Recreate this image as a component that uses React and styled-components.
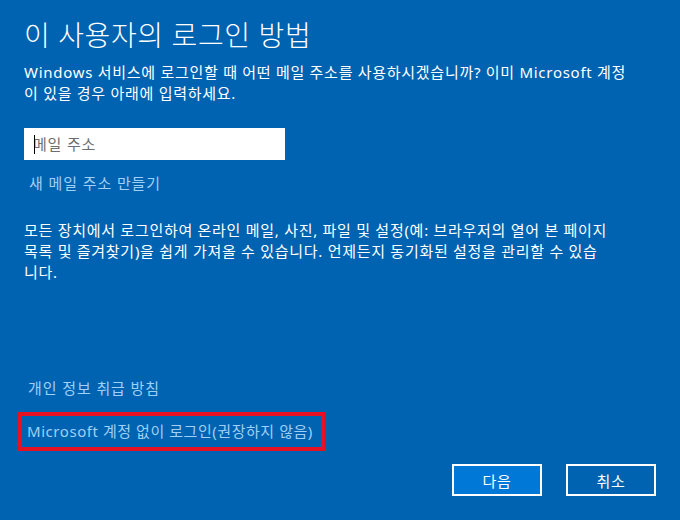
import styled, { createGlobalStyle } from 'styled-components'

const GlobalStyle = createGlobalStyle`
    html, body {
        margin: 0;
        padding: 0;
        background-color: #0063b1;
    }
    body {
        font-family: "Noto Sans", "Noto Sans CJK KR", sans-serif;
        color: white;
    }
`

const Page = styled.div`
    width: 680px;
    height: 520px;
    box-sizing: border-box;
    background-color: #0063b1;
    padding: 16px 24px 0 24px;
    display: flex;
    flex-direction: column;
    .title{
        font-size: 28px;
        font-weight: 300;
        line-height: 38px;
        letter-spacing: 0.6px;
        margin: 0;
    }
    .desc{
        font-size: 15px;
        line-height: 21px;
        letter-spacing: 0.72px;
        margin: 8px 0 0 0;
    }
`

const InputWrap = styled.div`
    position: relative;
    width: 261px;
    margin-top: 24px;
    &::after{
        content: '';
        position: absolute;
        left: 10px;
        top: 7px;
        width: 1px;
        height: 19px;
        background-color: #000;
    }
`

const EmailInput = styled.input`
    width: 100%;
    height: 32px;
    box-sizing: border-box;
    display: block;
    border: none;
    outline: none;
    padding: 0 9px;
    font-family: "Noto Sans", "Noto Sans CJK KR", sans-serif;
    font-size: 15px;
    letter-spacing: 0.8px;
    color: #000;
    caret-color: transparent;
    background-color: white;
    &::placeholder{
        color: #6d6d6d;
    }
`

const LinkText = styled.div`
    font-size: 15px;
    line-height: 21px;
    letter-spacing: ${props => props.$spacing ?? 0.9}px;
    white-space: nowrap;
    color: #9fd0f6;
    padding-left: ${props => props.$indent ?? 5}px;
`

const Footer = styled.div`
    margin-top: auto;
    display: flex;
    flex-direction: column;
    padding-bottom: 24px;
    .red-box{
        margin-top: 13px;
        margin-left: -6px;
        width: 307px;
        height: 39px;
        box-sizing: border-box;
        border: 4px solid #e81123;
        display: flex;
        align-items: center;
        padding-left: 5px;
    }
    .buttons{
        display: flex;
        justify-content: flex-end;
        gap: 24px;
        margin-top: 13px;
    }
`

const Button = styled.button`
    width: 90px;
    height: 32px;
    box-sizing: border-box;
    border: 2px solid white;
    background-color: ${props => props.$primary ? '#0078d7' : '#0063b1'};
    color: white;
    font-family: "Noto Sans", "Noto Sans CJK KR", sans-serif;
    font-size: 15px;
    letter-spacing: 0.8px;
    padding: 0;
`

const App = () => {
    return (
        <>
            <GlobalStyle />
            <Page>
                <h1 className="title">이 사용자의 로그인 방법</h1>
                <p className="desc">
                    Windows 서비스에 로그인할 때 어떤 메일 주소를 사용하시겠습니까? 이미 Microsoft 계정<br />
                    이 있을 경우 아래에 입력하세요.
                </p>
                <InputWrap>
                    <EmailInput placeholder="메일 주소" />
                </InputWrap>
                <LinkText style={{ marginTop: 13 }}>새 메일 주소 만들기</LinkText>
                <p className="desc" style={{ marginTop: 26 }}>
                    모든 장치에서 로그인하여 온라인 메일, 사진, 파일 및 설정(예: 브라우저의 열어 본 페이지<br />
                    목록 및 즐겨찾기)을 쉽게 가져올 수 있습니다. 언제든지 동기화된 설정을 관리할 수 있습<br />
                    니다.
                </p>
                <Footer>
                    <LinkText $indent={4}>개인 정보 취급 방침</LinkText>
                    <div className="red-box">
                        <LinkText $indent={0} $spacing={0.55}>Microsoft 계정 없이 로그인(권장하지 않음)</LinkText>
                    </div>
                    <div className="buttons">
                        <Button $primary>다음</Button>
                        <Button>취소</Button>
                    </div>
                </Footer>
            </Page>
        </>
    )
}

export default App
